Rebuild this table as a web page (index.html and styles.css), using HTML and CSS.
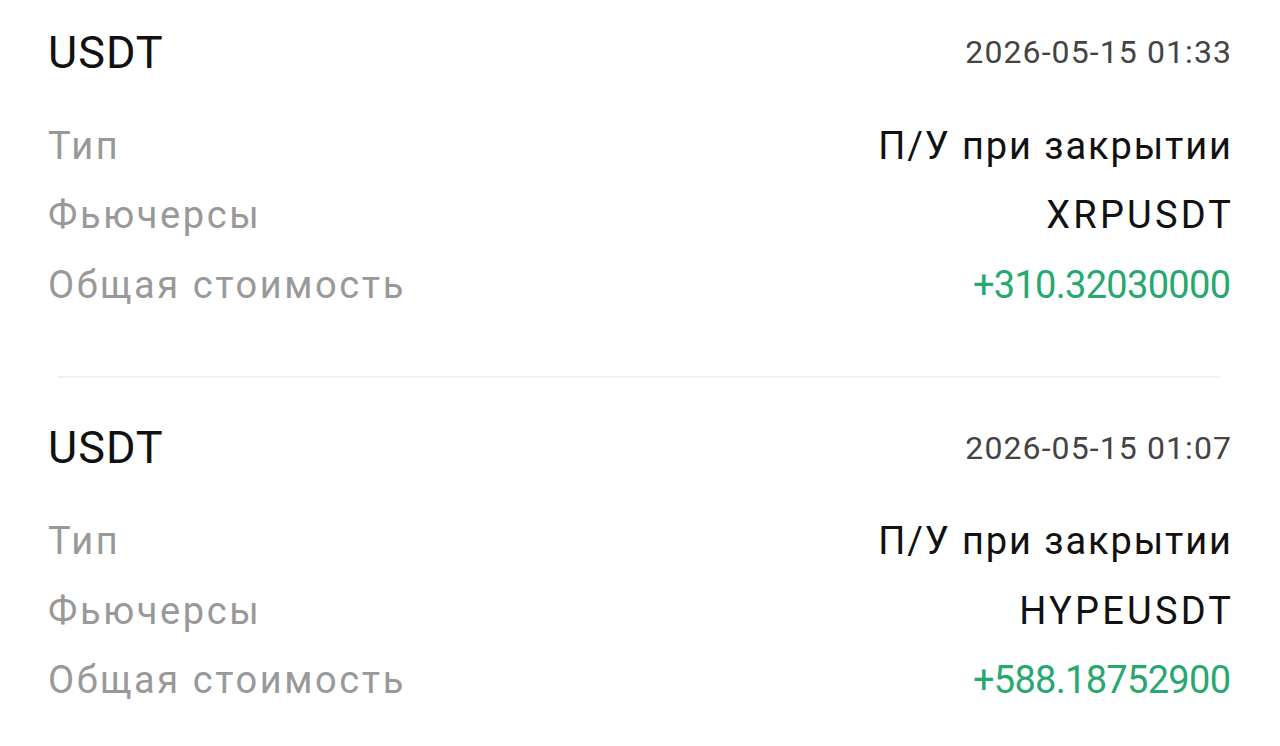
FILE: index.html
```html
<!DOCTYPE html>
<html lang="ru">
<head>
  <meta charset="UTF-8">
  <meta name="viewport" content="width=device-width, initial-scale=1.0">
  <title>История</title>
  <link rel="stylesheet" href="styles.css">
</head>
<body>
  <div class="record">
    <div class="record-head">
      <span class="coin">USDT</span>
      <span class="time">2026-05-15 01:33</span>
    </div>
    <div class="row">
      <span class="label">Тип</span>
      <span class="value">П/У при закрытии</span>
    </div>
    <div class="row">
      <span class="label">Фьючерсы</span>
      <span class="value ticker">XRPUSDT</span>
    </div>
    <div class="row">
      <span class="label">Общая стоимость</span>
      <span class="value profit">+310.32030000</span>
    </div>
  </div>

  <div class="divider"></div>

  <div class="record">
    <div class="record-head">
      <span class="coin">USDT</span>
      <span class="time">2026-05-15 01:07</span>
    </div>
    <div class="row">
      <span class="label">Тип</span>
      <span class="value">П/У при закрытии</span>
    </div>
    <div class="row">
      <span class="label">Фьючерсы</span>
      <span class="value ticker">HYPEUSDT</span>
    </div>
    <div class="row">
      <span class="label">Общая стоимость</span>
      <span class="value profit">+588.18752900</span>
    </div>
  </div>
</body>
</html>
```

FILE: styles.css
```css
body {
  margin: 0;
  padding: 0 49px 0 48px;
  background: #fff;
  font-family: Roboto, 'Noto Sans', sans-serif;
  color: #111;
}
.record {
  padding: 24px 0 56px;
}
.divider + .record {
  padding-top: 42px;
}
.record-head {
  display: flex;
  justify-content: space-between;
  align-items: center;
  height: 56px;
  margin-bottom: 31px;
}
.coin {
  font-size: 45px;
  letter-spacing: 1px;
  color: #111;
}
.time {
  font-size: 32px;
  letter-spacing: 1.1px;
  margin-right: -1.1px;
  color: #444;
}
.row {
  display: flex;
  justify-content: space-between;
  align-items: center;
  height: 69.5px;
  font-size: 38px;
}
.label {
  color: #999;
  letter-spacing: 2.6px;
}
.value {
  color: #111;
  letter-spacing: 1.9px;
  margin-right: -1.9px;
}
.ticker {
  letter-spacing: 3.2px;
  margin-right: -3.2px;
}
.profit {
  color: #27a86e;
  letter-spacing: -0.7px;
  margin-right: 0.7px;
}
.divider {
  height: 2px;
  margin: 0 11px 0 10px;
  background: #f2f2f2;
}
```
